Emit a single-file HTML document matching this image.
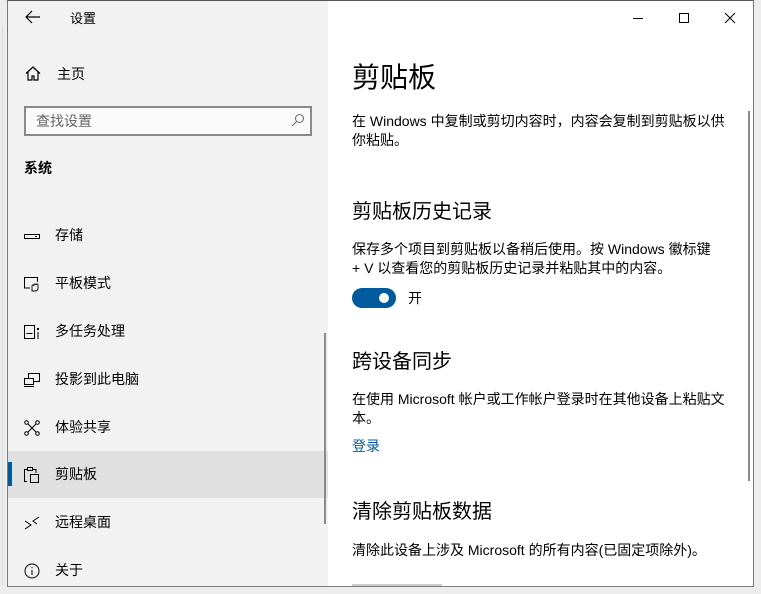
<!DOCTYPE html>
<html><head><meta charset="utf-8"><style>
*{margin:0;padding:0;box-sizing:border-box}
body{width:761px;height:594px;overflow:hidden;background:#ededed;position:relative;font-family:"Liberation Sans","Noto Sans CJK SC",sans-serif;color:#000}
.a{position:absolute;white-space:nowrap}
#win{position:absolute;left:7px;top:0;width:747px;height:587px;border:1px solid #7a7a7a;border-top:1px solid #555;background:#fff;overflow:hidden}
#side{position:absolute;left:0;top:0;width:320px;height:586px;background:#f2f2f2}
.it{position:absolute;left:0;width:320px;height:47px;font-size:14px}
.it span{position:absolute;left:47px;top:13px}
.it svg{position:absolute;left:16px;top:16px}
.p{font-size:14px;color:#000;line-height:19px}
h2{font-weight:normal;font-size:20px}
</style></head><body>
<div class="a" style="left:2px;top:25px;width:1px;height:560px;background:#d8d8d8"></div>
<div id="win">
<div id="side">
 <svg class="a" style="left:17px;top:9px" width="16" height="14" viewBox="0 0 16 14"><path d="M7 1L1 7l6 6M1 7h14" fill="none" stroke="#000" stroke-width="1.2"/></svg>
 <div class="a" style="left:62px;top:7px;font-size:13px">设置</div>
 <svg class="a" style="left:17px;top:65px" width="16" height="15" viewBox="0 0 16 15"><path d="M1 7.5L8 1l7 6.5M3 6v8h4v-4h2v4h4V6" fill="none" stroke="#000" stroke-width="1.2"/></svg>
 <div class="a" style="left:49px;top:63px;font-size:14px">主页</div>
 <div class="a" style="left:16px;top:105px;width:288px;height:30px;border:2px solid #8a8a8a;background:#fafafa"></div>
 <div class="a" style="left:28px;top:110px;font-size:14px;color:#666">查找设置</div>
 <svg class="a" style="left:283px;top:112px" width="14" height="14" viewBox="0 0 14 14"><circle cx="8.5" cy="5.5" r="4" fill="none" stroke="#666" stroke-width="1"/><path d="M5.5 8.5L1 13" stroke="#666" stroke-width="1"/></svg>
 <div class="a" style="left:16px;top:157px;font-size:14px;font-weight:bold">系统</div>
 <div class="it" style="top:211px"><svg width="16" height="16" viewBox="0 0 16 16"><rect x="0.5" y="6.5" width="15" height="4" fill="none" stroke="#000"/><rect x="11" y="8" width="2" height="1" fill="#000"/></svg><span>存储</span></div>
 <div class="it" style="top:259px"><svg width="16" height="16" viewBox="0 0 16 16"><path d="M6 12H0.5V1.5h13V6" fill="none" stroke="#000"/><path d="M8 15v-5a1 1 0 0 1 2 0v-1a1 1 0 0 1 2 0a1 1 0 0 1 2 0v3c0 2-1 3-3 3z" fill="none" stroke="#000" stroke-width="0.9"/></svg><span>平板模式</span></div>
 <div class="it" style="top:307px"><svg width="16" height="16" viewBox="0 0 16 16"><path d="M0.5 1v14M10.5 1v14M0 1.5h11M0 14.5h11M2.5 9.5h6" fill="none" stroke="#000"/><rect x="13" y="4" width="2" height="2"/><rect x="13.5" y="8" width="1" height="7"/></svg><span>多任务处理</span></div>
 <div class="it" style="top:355px"><svg width="16" height="16" viewBox="0 0 16 16"><path d="M4.5 6V1.5h11v8H10M0.5 6.5h9v6h-9zM0 14.5h10" fill="none" stroke="#000"/></svg><span>投影到此电脑</span></div>
 <div class="it" style="top:403px"><svg width="16" height="16" viewBox="0 0 16 16"><circle cx="2.5" cy="2.5" r="1.8" fill="none" stroke="#000"/><circle cx="13.5" cy="2.5" r="1.8" fill="none" stroke="#000"/><circle cx="2.5" cy="13.5" r="1.8" fill="none" stroke="#000"/><circle cx="13.5" cy="13.5" r="1.8" fill="none" stroke="#000"/><path d="M4 4l8 8M12 4l-8 8" stroke="#000"/></svg><span>体验共享</span></div>
 <div class="it" style="top:450px;background:#e0e0e0"><div class="a" style="left:0;top:11px;width:4px;height:24px;background:#005a9e"></div><svg width="16" height="16" viewBox="0 0 16 16"><path d="M3 14.5H0.5V2.5h3M9 2.5h3V6" fill="none" stroke="#000"/><rect x="3.5" y="0.5" width="5" height="3" fill="none" stroke="#000"/><rect x="6.5" y="7.5" width="8" height="8" fill="none" stroke="#000"/></svg><span>剪贴板</span></div>
 <div class="it" style="top:498px"><svg width="16" height="16" viewBox="0 0 16 16"><path d="M1 6l6 4-6 4M15 2L9 6l4 3" fill="none" stroke="#000"/></svg><span>远程桌面</span></div>
 <div class="it" style="top:546px"><svg width="16" height="16" viewBox="0 0 16 16"><circle cx="8" cy="8" r="7" fill="none" stroke="#000"/><rect x="7.5" y="7" width="1" height="5"/><rect x="7.5" y="4" width="1" height="1.2"/></svg><span>关于</span></div>
 <div class="a" style="left:316px;top:332px;width:2px;height:191px;background:#8a8a8a"></div>
</div>
<svg class="a" style="left:625px;top:11px" width="110" height="12" viewBox="0 0 110 12"><path d="M0 6.5h10" stroke="#000"/><rect x="46.5" y="1.5" width="9" height="9" fill="none" stroke="#000"/><path d="M92 1l10 10M102 1L92 11" stroke="#000"/></svg>
<h2 class="a" style="left:344px;top:55px;font-size:28px">剪贴板</h2>
<div class="a p" style="left:344px;top:111px">在 Windows 中复制或剪切内容时，内容会复制到剪贴板以供<br>你粘贴。</div>
<h2 class="a" style="left:344px;top:194px">剪贴板历史记录</h2>
<div class="a p" style="left:344px;top:239px">保存多个项目到剪贴板以备稍后使用。按 Windows 徽标键<br>+ V 以查看您的剪贴板历史记录并粘贴其中的内容。</div>
<div class="a" style="left:344px;top:287px;width:44px;height:20px;border-radius:10px;background:#005a9e"><div class="a" style="left:27px;top:5px;width:10px;height:10px;border-radius:5px;background:#fff"></div></div>
<div class="a" style="left:400px;top:287px;font-size:14px">开</div>
<h2 class="a" style="left:344px;top:344px">跨设备同步</h2>
<div class="a p" style="left:344px;top:389px">在使用 Microsoft 帐户或工作帐户登录时在其他设备上粘贴文<br>本。</div>
<div class="a" style="left:344px;top:435px;font-size:14px;color:#005a9e">登录</div>
<h2 class="a" style="left:344px;top:494px">清除剪贴板数据</h2>
<div class="a p" style="left:344px;top:540px">清除此设备上涉及 Microsoft 的所有内容(已固定项除外)。</div>
<div class="a" style="left:344px;top:583px;width:90px;height:4px;background:#ccc"></div>
<div class="a" style="left:740px;top:110px;width:2px;height:370px;background:#8a8a8a"></div>
</div>
</body></html>
